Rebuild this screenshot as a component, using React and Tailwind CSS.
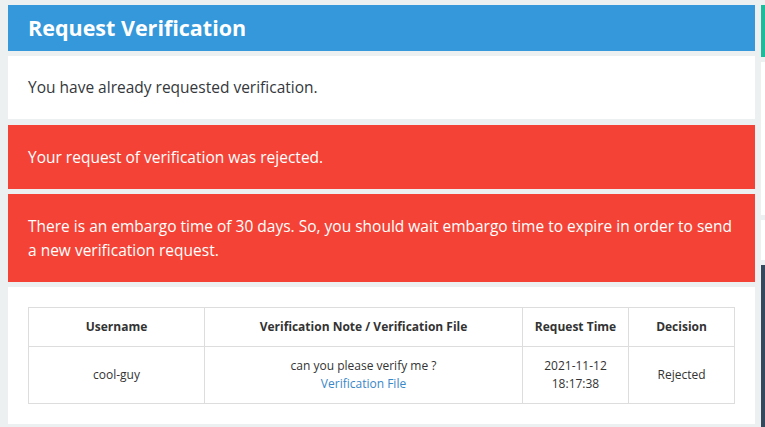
import React from 'react';

const rows = [
  {
    username: 'cool-guy',
    note: 'can you please verify me ?',
    file: 'Verification File',
    date: '2021-11-12',
    time: '18:17:38',
    decision: 'Rejected',
  },
];

const App = () => {
  return (
    <div className="min-h-[427px] w-[765px] overflow-hidden bg-[#ecf0f1] flex gap-[6px] pt-[5px] pl-[8px] font-['Open_Sans',sans-serif]">
      {/* Main column */}
      <div className="w-[747px] shrink-0 flex flex-col">
        {/* Header */}
        <div className="bg-[#3498db] h-[46px] px-[20px] flex items-center">
          <h1 className="text-white text-[21.5px] font-bold leading-none">Request Verification</h1>
        </div>

        <div className="mt-[5px] bg-white px-[20px] py-[20px] text-[15.5px] leading-[23px] text-[#34383c]">
          You have already requested verification.
        </div>

        <div className="mt-[6px] bg-[#f44336] px-[20px] py-[20px] text-[15.5px] leading-[24px] text-white">
          Your request of verification was rejected.
        </div>

        <div className="mt-[5px] bg-[#f44336] px-[20px] py-[20px] text-[15.5px] leading-[24px] text-white">
          There is an embargo time of 30 days. So, you should wait embargo time to expire in order to send a new verification request.
        </div>

        {/* Table panel */}
        <div className="mt-[5px] bg-white p-[20px]">
          <table className="w-full border-collapse text-[12px] leading-[18px] text-[#333] text-center">
            <thead>
              <tr>
                <th className="w-[176px] border border-[#dddddd] px-[10px] py-[10px] font-bold">Username</th>
                <th className="w-[318px] border border-[#dddddd] px-[10px] py-[10px] font-bold">Verification Note / Verification File</th>
                <th className="w-[106px] border border-[#dddddd] px-[10px] py-[10px] font-bold">Request Time</th>
                <th className="border border-[#dddddd] px-[10px] py-[10px] font-bold">Decision</th>
              </tr>
            </thead>
            <tbody>
              {rows.map((r) => (
                <tr key={r.username}>
                  <td className="border border-[#dddddd] px-[10px] py-[10px]">{r.username}</td>
                  <td className="border border-[#dddddd] px-[10px] py-[10px]">
                    <div>{r.note}</div>
                    <a href="#" className="text-[#3a87c8]">{r.file}</a>
                  </td>
                  <td className="border border-[#dddddd] px-[10px] py-[10px]">
                    <div>{r.date}</div>
                    <div>{r.time}</div>
                  </td>
                  <td className="border border-[#dddddd] px-[10px] py-[10px]">{r.decision}</td>
                </tr>
              ))}
            </tbody>
          </table>
        </div>
      </div>

      {/* Next column peeking in */}
      <div className="w-[10px] shrink-0 flex flex-col">
        <div className="h-[52px] bg-[#1abc9c]" />
        <div className="mt-[5px] h-[153px] bg-white" />
        <div className="mt-[5px] h-[40px] bg-white" />
        <div className="mt-[5px] flex-1 bg-[#34495e]" />
      </div>
    </div>
  );
};

export default App;
